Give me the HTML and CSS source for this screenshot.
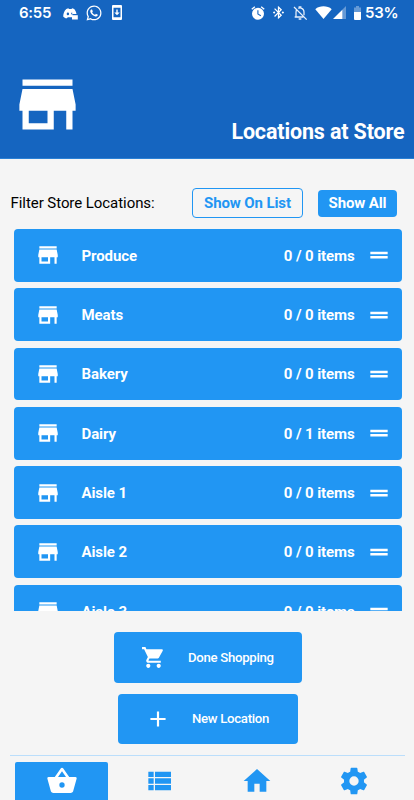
FILE: index.html
```html
<!DOCTYPE html>
<html lang="en">
<head>
    <meta charset="UTF-8">
    <meta name="viewport" content="width=device-width, initial-scale=1.0">
    <title>Locations at Store</title>
    <link rel="stylesheet" href="styles.css">
</head>
<body>
    <svg class="sprite" width="0" height="0">
        <symbol id="store" viewBox="0 0 24 24"><path d="M12,18H6V14H12M21,14V12L20,7H4L3,12V14H4V20H14V14H18V20H20V14M20,4H4V6H20V4Z"/></symbol>
        <symbol id="drag" viewBox="0 0 24 24"><path d="M20 9H4v2.300h16V9zM4 15.300h16v-2.300H4v2.300z"/></symbol>
    </svg>
    <header>
        <div class="status">
            <span class="time">6:55</span>
            <svg class="discord" viewBox="0 0 15 12"><path fill-rule="evenodd" d="M3.300 1 5.300.2 6 1h2.500l.7-.8 2 .8C12.500 2.600 13.300 4.500 13.500 6H9.500v3.200H5L3.200 10.400C1.700 10 .8 9.400.2 8.600.2 5.700 1.200 2.900 3.300 1zM4.900 4.600a1.200 1.300 0 1 0 0 2.600 1.200 1.300 0 1 0 0-2.600zM9.200 4.500a1.100 1.100 0 1 0 0 2.200V4.500z"/><path d="M9 7.200h5.800v4.300H9z"/></svg>
            <svg class="whatsapp" viewBox="0 0 24 24"><path d="M12.040 2C6.580 2 2.130 6.450 2.130 11.910C2.130 13.660 2.590 15.360 3.450 16.860L2.050 22L7.300 20.620C8.750 21.410 10.380 21.830 12.040 21.830C17.500 21.830 21.950 17.380 21.950 11.920C21.950 9.270 20.920 6.780 19.050 4.910C17.180 3.030 14.690 2 12.040 2M12.050 3.670C14.250 3.670 16.310 4.530 17.870 6.090C19.420 7.650 20.280 9.720 20.280 11.920C20.280 16.460 16.580 20.150 12.040 20.150C10.560 20.150 9.110 19.760 7.850 19L7.550 18.830L4.430 19.650L5.260 16.610L5.060 16.290C4.240 15 3.800 13.470 3.800 11.910C3.810 7.370 7.500 3.670 12.050 3.670M8.530 7.330C8.370 7.330 8.100 7.390 7.870 7.640C7.650 7.890 7 8.500 7 9.710C7 10.930 7.890 12.100 8 12.270C8.140 12.440 9.760 14.940 12.250 16C12.840 16.270 13.300 16.420 13.660 16.530C14.250 16.720 14.790 16.690 15.220 16.630C15.700 16.560 16.680 16.030 16.890 15.450C17.100 14.870 17.100 14.380 17.040 14.270C16.970 14.170 16.810 14.110 16.560 14C16.310 13.860 15.090 13.260 14.870 13.180C14.640 13.100 14.500 13.060 14.310 13.300C14.150 13.550 13.670 14.110 13.530 14.270C13.380 14.440 13.240 14.460 13 14.340C12.740 14.210 11.940 13.950 11 13.110C10.260 12.450 9.770 11.640 9.620 11.390C9.500 11.150 9.610 11 9.730 10.890C9.840 10.780 10 10.600 10.100 10.450C10.230 10.310 10.270 10.200 10.350 10.040C10.430 9.870 10.390 9.730 10.330 9.610C10.270 9.500 9.770 8.260 9.560 7.770C9.360 7.290 9.160 7.350 9 7.340C8.860 7.340 8.700 7.330 8.530 7.330Z"/></svg>
            <svg class="download" viewBox="0 0 10 15"><path fill-rule="evenodd" d="M1 0h8q1 0 1 1v13q0 1-1 1H1q-1 0-1-1V1q0-1 1-1zM1.500 2.700v9.600h7V2.700zM4.300 4.500h1.400v3h2L5 10.300 2.300 7.500h2z"/></svg>
            <svg class="alarm" viewBox="0 0 24 24"><path fill-rule="evenodd" d="M22 5.720l-4.600-3.860-1.290 1.530 4.600 3.860L22 5.720zM7.880 3.390L6.600 1.860 2 5.710l1.290 1.530 4.590-3.850zM12 4a9 9 0 1 0 0 18 9 9 0 0 0 0-18zM11 8h1.700v5l4 2.300-.9 1.400L11 14z"/></svg>
            <svg class="bluetooth" viewBox="0 0 24 24"><path d="M7 12l-2-2-2 2 2 2 2-2zm10.710-4.290L12 2h-1v7.590L6.410 5 5 6.410 10.590 12 5 17.590 6.410 19 11 14.410V22h1l5.710-5.710-4.300-4.290 4.300-4.290zM13 5.830l1.880 1.880L13 9.590V5.830zm1.880 10.460L13 18.170v-3.760l1.880 1.880zM19 10l-2 2 2 2 2-2-2-2z"/></svg>
            <svg class="bell" viewBox="0 0 24 24"><path d="M6 17.500V11c0-2 .6-3.600 1.600-4.700M9.500 5.200 10.800 4.800V3h2.400v1.800C16.500 5.500 18 8 18 11v4.500M4 18h13M10 21h4M3 3l19 19" fill="none" stroke="#e8f0fb" stroke-width="1.900"/></svg>
            <svg class="wifi" viewBox="0 0 17 13"><path d="M8.500 13 .3 3.200C4.500-.6 12.500-.6 16.700 3.200z"/></svg>
            <svg class="signal" viewBox="0 0 13 13"><path opacity=".35" d="M13 0v13H9V4z"/><path d="M0 13 9.300 3.700V13z"/></svg>
            <svg class="battery" viewBox="0 0 7 14"><path opacity=".35" d="M2 0h3v1.500h2V6.500H0V1.500h2z"/><path d="M0 6h7v7q0 1-1 1H1q-1 0-1-1z"/></svg>
            <span class="percent">53%</span>
        </div>
        <div class="title">
            <svg><use href="#store"/></svg>
            <h1>Locations at Store</h1>
        </div>
    </header>

    <div class="filter">
        <span class="label">Filter Store Locations:</span>
        <button class="outline">Show On List</button>
        <button class="solid">Show All</button>
    </div>

    <div class="list">
        <div class="row"><svg><use href="#store"/></svg><span class="name">Produce</span><span class="count">0 / 0 items</span><svg><use href="#drag"/></svg></div>
        <div class="row"><svg><use href="#store"/></svg><span class="name">Meats</span><span class="count">0 / 0 items</span><svg><use href="#drag"/></svg></div>
        <div class="row"><svg><use href="#store"/></svg><span class="name">Bakery</span><span class="count">0 / 0 items</span><svg><use href="#drag"/></svg></div>
        <div class="row"><svg><use href="#store"/></svg><span class="name">Dairy</span><span class="count">0 / 1 items</span><svg><use href="#drag"/></svg></div>
        <div class="row"><svg><use href="#store"/></svg><span class="name">Aisle 1</span><span class="count">0 / 0 items</span><svg><use href="#drag"/></svg></div>
        <div class="row"><svg><use href="#store"/></svg><span class="name">Aisle 2</span><span class="count">0 / 0 items</span><svg><use href="#drag"/></svg></div>
        <div class="row"><svg><use href="#store"/></svg><span class="name">Aisle 3</span><span class="count">0 / 0 items</span><svg><use href="#drag"/></svg></div>
    </div>

    <div class="actions">
        <button class="done">
            <svg viewBox="0 0 24 24"><path d="M7 18c-1.100 0-1.990.9-1.990 2S5.900 22 7 22s2-.9 2-2-.9-2-2-2zM1 2v2h2l3.600 7.590-1.350 2.450c-.16.28-.25.61-.25.96 0 1.100.9 2 2 2h12v-2H7.420c-.14 0-.25-.11-.25-.25l.03-.12.900-1.630h7.450c.75 0 1.410-.41 1.750-1.030l3.580-6.490c.08-.14.12-.31.12-.48 0-.55-.45-1-1-1H5.210l-.94-2H1zm16 16c-1.100 0-1.990.9-1.990 2s.89 2 1.990 2 2-.9 2-2-.9-2-2-2z"/></svg>
            <span>Done Shopping</span>
        </button>
        <button class="new">
            <svg viewBox="0 0 24 24"><path d="M19 13h-6v6h-2v-6H5v-2h6V5h2v6h6v2z"/></svg>
            <span>New Location</span>
        </button>
    </div>

    <nav>
        <a class="active"><svg viewBox="0 0 24 24"><path d="M5.500,21C4.720,21 4.040,20.550 3.710,19.900V19.900L1.100,10.440L1,10A1,1 0 0,1 2,9H6.580L11.180,2.430C11.360,2.170 11.660,2 12,2C12.340,2 12.640,2.170 12.820,2.440L17.420,9H22A1,1 0 0,1 23,10L22.960,10.290L20.290,19.900C19.960,20.550 19.280,21 18.500,21H5.500M12,4.740L9,9H15L12,4.740M12,13A2,2 0 0,0 10,15A2,2 0 0,0 12,17A2,2 0 0,0 14,15A2,2 0 0,0 12,13Z"/></svg></a>
        <a><svg viewBox="0 0 24 24"><path d="M9,5V9H21V5M9,19H21V15H9M9,14H21V10H9M4,9H8V5H4M4,19H8V15H4M4,14H8V10H4V14Z"/></svg></a>
        <a><svg viewBox="0 0 24 24"><path d="M10,20V14H14V20H19V12H22L12,3L2,12H5V20H10Z"/></svg></a>
        <a><svg viewBox="0 0 24 24"><path d="M12,15.500A3.500,3.500 0 0,1 8.500,12A3.500,3.500 0 0,1 12,8.500A3.500,3.500 0 0,1 15.500,12A3.500,3.500 0 0,1 12,15.500M19.430,12.970C19.470,12.650 19.500,12.330 19.500,12C19.500,11.670 19.470,11.340 19.430,11L21.540,9.370C21.730,9.220 21.780,8.950 21.660,8.730L19.660,5.270C19.540,5.050 19.270,4.960 19.050,5.050L16.560,6.050C16.040,5.660 15.500,5.320 14.870,5.070L14.500,2.420C14.460,2.180 14.250,2 14,2H10C9.750,2 9.540,2.180 9.500,2.420L9.130,5.070C8.500,5.320 7.960,5.660 7.440,6.050L4.950,5.050C4.730,4.960 4.460,5.050 4.340,5.270L2.340,8.730C2.210,8.950 2.270,9.220 2.460,9.370L4.570,11C4.530,11.340 4.500,11.670 4.500,12C4.500,12.330 4.530,12.650 4.570,12.970L2.460,14.630C2.270,14.780 2.210,15.050 2.340,15.270L4.340,18.730C4.460,18.950 4.730,19.030 4.950,18.950L7.440,17.940C7.960,18.340 8.500,18.680 9.130,18.930L9.500,21.580C9.540,21.820 9.750,22 10,22H14C14.250,22 14.460,21.820 14.500,21.580L14.870,18.930C15.500,18.670 16.040,18.340 16.560,17.940L19.050,18.950C19.270,19.030 19.540,18.950 19.660,18.730L21.660,15.270C21.780,15.050 21.730,14.780 21.540,14.630L19.430,12.970Z"/></svg></a>
    </nav>
</body>
</html>
```
FILE: styles.css
```css
* {
    box-sizing: border-box;
}
body {
    margin: 0;
    height: 800px;
    overflow: hidden;
    display: flex;
    flex-direction: column;
    background-color: #f5f5f5;
    color: #000;
    font-family: Roboto, sans-serif;
}
svg {
    display: block;
    flex: none;
    fill: currentColor;
}
.sprite {
    position: absolute;
}
button {
    border: none;
    border-radius: 4px;
    padding: 0;
    font-family: inherit;
    white-space: nowrap;
}
header {
    height: 159px;
    flex: none;
    background-color: #1565c0;
    border-bottom: 1px solid #2a80d5;
    color: #fff;
}

/* status bar */
.status {
    display: flex;
    align-items: center;
    height: 25px;
    padding-left: 19px;
    font: 600 15px/25px Inter, sans-serif;
    letter-spacing: -0.3px;
}
.time {
    width: 44px;
}
.discord {
    width: 15px;
    height: 12px;
    margin-top: 3px;
}
.whatsapp {
    width: 18px;
    height: 18px;
    margin-left: 7px;
}
.download {
    width: 10px;
    height: 15px;
    margin-left: 9px;
}
.alarm {
    width: 16px;
    height: 16px;
    margin-left: auto;
}
.bluetooth {
    width: 15px;
    height: 15px;
    margin-left: 5px;
}
.bell {
    width: 16px;
    height: 16px;
    margin-left: 6px;
}
.wifi {
    width: 17px;
    height: 13px;
    margin-left: 7px;
}
.signal {
    width: 13px;
    height: 13px;
    margin-left: 1px;
}
.battery {
    width: 7px;
    height: 14px;
    margin-left: 8px;
}
.percent {
    width: 49px;
    margin-left: 4px;
}

.title {
    display: flex;
    justify-content: space-between;
    padding: 42px 9.500px 0 10px;
}
.title svg {
    width: 75px;
    height: 75px;
}
.title h1 {
    margin: 52px 0 0;
    font-size: 21.500px;
    line-height: 25px;
    font-weight: 700;
    letter-spacing: -0.150px;
    white-space: nowrap;
}

/* filter */
.filter {
    display: flex;
    align-items: center;
    height: 30px;
    margin: 29px 17px 0 10.500px;
    flex: none;
}
.label {
    flex: 1;
    font-size: 15px;
    letter-spacing: -0.060px;
    white-space: nowrap;
}
.filter button {
    font-size: 15px;
    font-weight: 700;
    letter-spacing: -0.120px;
}
.outline {
    width: 111px;
    height: 30px;
    border: 1px solid #2196f3;
    background-color: transparent;
    color: #2196f3;
    margin-right: 15px;
}
.solid {
    width: 79px;
    height: 27px;
    background-color: #2196f3;
    color: #fff;
}

/* locations */
.list {
    display: flex;
    flex-direction: column;
    gap: 6.500px;
    height: 382px;
    margin: 11px 12px 0 14px;
    overflow: hidden;
    flex: none;
}
.row {
    display: flex;
    align-items: center;
    flex: none;
    height: 52.800px;
    padding: 0 10.500px 0 20.500px;
    border-radius: 4px;
    background-color: #2196f3;
    color: #fff;
    font-size: 15px;
    font-weight: 700;
    letter-spacing: -0.100px;
}
.row svg {
    width: 26px;
    height: 26px;
}
.row span {
    padding-top: 1px;
}
.name {
    flex: 1;
    margin-left: 21px;
}
.count {
    margin-right: 11px;
}

/* buttons */
.actions {
    display: flex;
    flex-direction: column;
    align-items: center;
    gap: 11px;
    margin: 21px 0 0 2px;
    flex: none;
}
.actions button {
    display: flex;
    align-items: center;
    height: 50.500px;
    background-color: #2196f3;
    color: #fff;
    font-size: 13.200px;
    font-weight: 500;
    letter-spacing: -0.300px;
}
.done {
    width: 188px;
    padding-left: 27px;
}
.done svg {
    width: 25px;
    height: 25px;
    margin-right: 22px;
}
.new {
    width: 180px;
    padding-left: 27px;
}
.new svg {
    width: 26px;
    height: 26px;
    margin-right: 21px;
}

nav {
    display: flex;
    gap: 4.400px;
    margin: 11px 9px 0 10px;
    padding: 6px 4px 0 5px;
    border-top: 1px solid #bbdefb;
    flex: 1;
}
nav a {
    display: flex;
    justify-content: center;
    flex: 1;
    padding-top: 3px;
    color: #2196f3;
}
nav a.active {
    background-color: #2196f3;
    border-radius: 2px 2px 0 0;
    color: #fff;
}
nav svg {
    width: 32px;
    height: 32px;
}
```
